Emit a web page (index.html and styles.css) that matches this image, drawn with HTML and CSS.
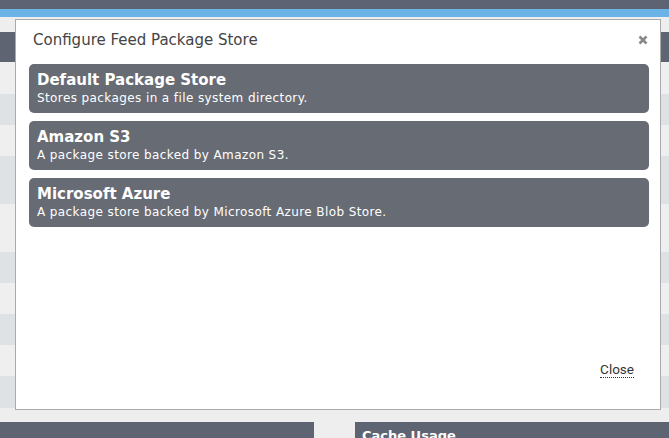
FILE: index.html
```html
<!DOCTYPE html>
<html>
<head>
<meta charset="utf-8">
<link rel="stylesheet" href="styles.css">
</head>
<body>
<div class="topbar"></div>
<div class="accent"></div>
<div class="page">
  <div class="table">
    <div class="thead"></div>
    <div class="row r32 light"></div>
    <div class="row r31 gray"></div>
    <div class="row r31 light"></div>
    <div class="row r48 gray"></div>
    <div class="row r48 light"></div>
    <div class="row r31 gray"></div>
    <div class="row r31 light"></div>
    <div class="row r31 gray"></div>
    <div class="row r31 light"></div>
    <div class="row r32 gray"></div>
  </div>
  <div class="panels">
    <div class="panel left"></div>
    <div class="panel right"><span class="panel-title">Cache Usage</span></div>
  </div>
</div>

<div class="modal">
  <div class="modal-header">
    <span class="modal-title">Configure Feed Package Store</span>
    <svg class="close-x" width="10" height="10" viewBox="0 0 10 10"><path d="M1.5 1.5 L8.5 8.5 M8.5 1.5 L1.5 8.5" stroke="#888" stroke-width="2.6" stroke-linecap="butt"/></svg>
  </div>
  <div class="modal-body">
    <div class="card">
      <div class="card-title">Default Package Store</div>
      <div class="card-desc">Stores packages in a file system directory.</div>
    </div>
    <div class="card">
      <div class="card-title">Amazon S3</div>
      <div class="card-desc">A package store backed by Amazon S3.</div>
    </div>
    <div class="card">
      <div class="card-title">Microsoft Azure</div>
      <div class="card-desc">A package store backed by Microsoft Azure Blob Store.</div>
    </div>
  </div>
  <div class="modal-footer">
    <a class="close-link">Close</a>
  </div>
</div>
</body>
</html>
```

FILE: styles.css
```css
html, body {
  margin: 0;
  padding: 0;
}
body {
  background: #eeeeee;
  width: 669px;
  height: 438px;
  overflow: hidden;
  font-family: "DejaVu Sans", sans-serif;
}
.topbar {
  height: 9px;
  background: #5e6373;
}
.accent {
  height: 8px;
  background: #6bb3e6;
}
.page {
  padding-top: 15px;
}
.thead {
  height: 30px;
  background: #5f6473;
}
.row.light { background: #efefef; }
.row.gray { background: #dfe2e5; }
.r31 { height: 31px; }
.r32 { height: 32px; }
.r48 { height: 48px; }
.panels {
  margin-top: 14px;
  display: flex;
  gap: 41px;
}
.panel {
  height: 16px;
  background: #5f6473;
  box-sizing: border-box;
  overflow: hidden;
}
.panel.left { width: 314px; }
.panel.right {
  flex: 1;
  padding: 6px 7px 0;
}
.panel-title {
  display: block;
  color: #ffffff;
  font-weight: 700;
  font-size: 13px;
  line-height: 16px;
}
.modal {
  position: absolute;
  left: 15px;
  top: 19px;
  width: 646px;
  height: 391px;
  box-sizing: border-box;
  background: #ffffff;
  border: 1px solid #aaaaaa;
  display: flex;
  flex-direction: column;
}
.modal-header {
  display: flex;
  justify-content: space-between;
  align-items: center;
  padding: 9px 12px 10px 17px;
  height: 40px;
  box-sizing: border-box;
}
.modal-title {
  font-size: 15px;
  color: #444444;
  line-height: 20px;
}
.close-x {
  display: block;
}
.modal-body {
  padding: 4px 11px 0 13px;
  display: flex;
  flex-direction: column;
  gap: 8px;
}
.card {
  background: #676b74;
  border-radius: 5px;
  padding: 7px 8px 5px;
  height: 49px;
  box-sizing: border-box;
  color: #ffffff;
}
.card-title {
  font-size: 15px;
  font-weight: 700;
  line-height: 19px;
}
.card-desc {
  font-size: 12px;
  letter-spacing: 0.4px;
  line-height: 17px;
}
.modal-footer {
  margin-top: auto;
  display: flex;
  justify-content: flex-end;
  padding: 0 26px 31px;
}
.close-link {
  font-family: Roboto, sans-serif;
  font-size: 13.5px;
  line-height: 16px;
  color: #333333;
  border-bottom: 1px dotted #333333;
}
```
